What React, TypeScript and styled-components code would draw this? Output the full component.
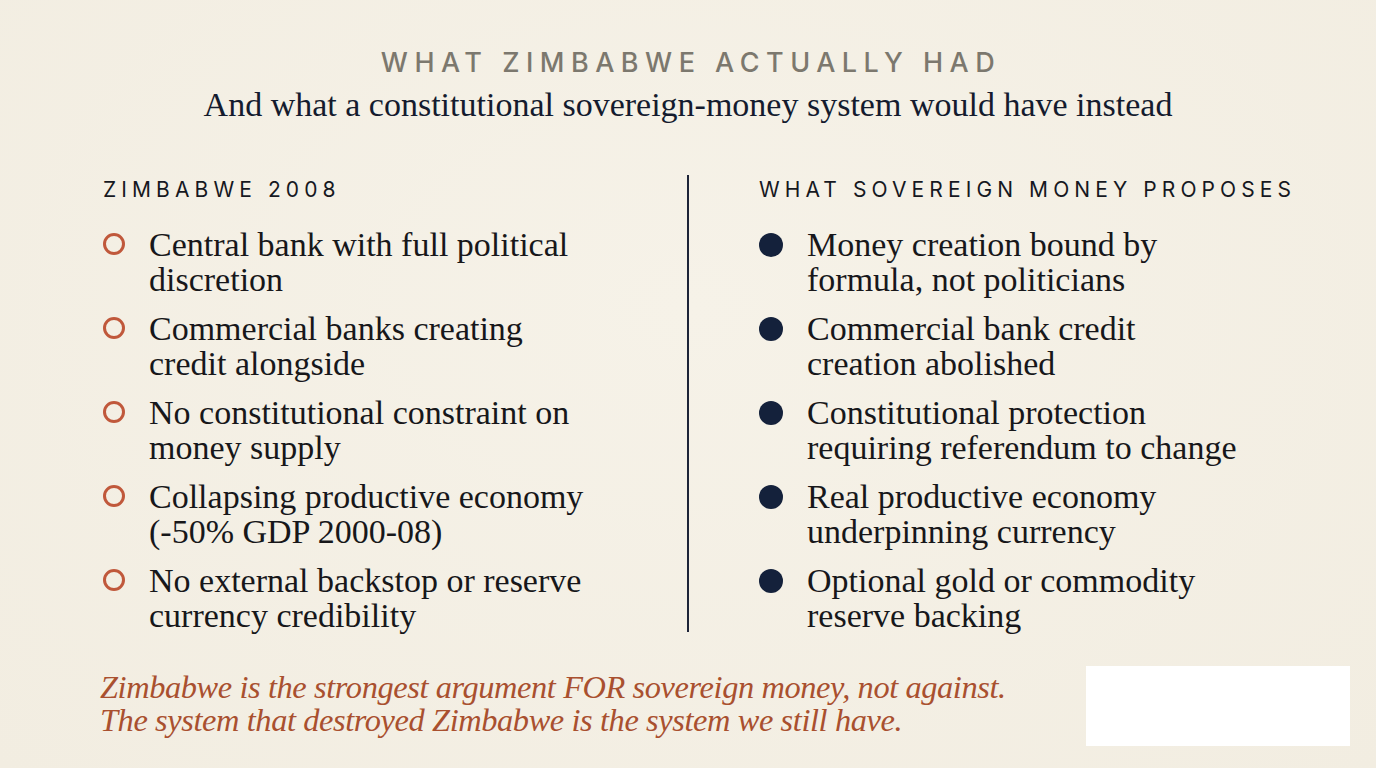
import React from "react";
import styled, { createGlobalStyle } from "styled-components";

const Global = createGlobalStyle`
  html, body { margin: 0; padding: 0; background: #f3eee3; }
  * { box-sizing: border-box; }
`;

const Page = styled.div`
  width: 1376px;
  height: 768px;
  background: radial-gradient(ellipse at 50% 40%, #f6f2e8 0%, #f2ede1 100%);
  display: flex;
  flex-direction: column;
  overflow: hidden;
`;

const Header = styled.header`
  display: flex;
  flex-direction: column;
  align-items: center;
  padding-top: 47px;
`;

const Kicker = styled.div`
  font-family: "Inter", "Liberation Sans", sans-serif;
  font-size: 27px;
  font-weight: 500;
  letter-spacing: 6.5px;
  color: #7c786e;
  line-height: 32px;
  padding-left: 6px;
`;

const Subtitle = styled.h1`
  margin: 6px 0 0;
  font-family: "Liberation Serif", serif;
  font-weight: 400;
  font-size: 34px;
  line-height: 40px;
  color: #141b2e;
`;

const Columns = styled.section`
  display: grid;
  grid-template-columns: 584px 2px 1fr;
  padding-left: 103px;
  margin-top: 50px;
  height: 457px;
`;

const Column = styled.div<{ $right?: boolean }>`
  padding-left: ${(p) => (p.$right ? "70px" : "0")};
  padding-top: 3px;
`;

const Divider = styled.div`
  background: #1d2438;
  width: 2px;
  height: 457px;
`;

const ColTitle = styled.div`
  font-family: "Inter", "Liberation Sans", sans-serif;
  font-size: 21px;
  font-weight: 400;
  letter-spacing: 5.1px;
  color: #16181f;
  line-height: 24px;
`;

const List = styled.ul`
  list-style: none;
  margin: 25px 0 0;
  padding: 0;
  display: flex;
  flex-direction: column;
  gap: 14px;
`;

const Item = styled.li`
  display: flex;
  align-items: flex-start;
  gap: 24px;
`;

const Bullet = styled.span<{ $filled?: boolean }>`
  flex: none;
  width: ${(p) => (p.$filled ? "24px" : "22px")};
  height: ${(p) => (p.$filled ? "24px" : "22px")};
  margin-top: 6px;
  border-radius: 50%;
  border: ${(p) => (p.$filled ? "none" : "3px solid #c0583b")};
  background: ${(p) => (p.$filled ? "#14213b" : "transparent")};
`;

const ItemText = styled.span`
  font-family: "Liberation Serif", serif;
  font-size: 34px;
  line-height: 35px;
  color: #17171a;
`;

const Footer = styled.footer`
  display: flex;
  align-items: flex-start;
  justify-content: space-between;
  padding: 34px 26px 0 100px;
`;

const Quote = styled.p`
  margin: 5px 0 0;
  font-family: "Liberation Serif", serif;
  font-style: italic;
  font-size: 32.4px;
  line-height: 33px;
  color: #a9502f;
  letter-spacing: -0.4px;
`;

const Blank = styled.div`
  width: 264px;
  height: 80px;
  background: #ffffff;
`;

const left = [
  ["Central bank with full political", "discretion"],
  ["Commercial banks creating", "credit alongside"],
  ["No constitutional constraint on", "money supply"],
  ["Collapsing productive economy", "(-50% GDP 2000-08)"],
  ["No external backstop or reserve", "currency credibility"],
];

const right = [
  ["Money creation bound by", "formula, not politicians"],
  ["Commercial bank credit", "creation abolished"],
  ["Constitutional protection", "requiring referendum to change"],
  ["Real productive economy", "underpinning currency"],
  ["Optional gold or commodity", "reserve backing"],
];

export default function App() {
  return (
    <>
      <Global />
      <Page>
        <Header>
          <Kicker>WHAT ZIMBABWE ACTUALLY HAD</Kicker>
          <Subtitle>And what a constitutional sovereign-money system would have instead</Subtitle>
        </Header>
        <Columns>
          <Column>
            <ColTitle>ZIMBABWE 2008</ColTitle>
            <List>
              {left.map((l) => (
                <Item key={l[0]}>
                  <Bullet />
                  <ItemText>
                    {l[0]}
                    <br />
                    {l[1]}
                  </ItemText>
                </Item>
              ))}
            </List>
          </Column>
          <Divider />
          <Column $right>
            <ColTitle>WHAT SOVEREIGN MONEY PROPOSES</ColTitle>
            <List>
              {right.map((l) => (
                <Item key={l[0]}>
                  <Bullet $filled />
                  <ItemText>
                    {l[0]}
                    <br />
                    {l[1]}
                  </ItemText>
                </Item>
              ))}
            </List>
          </Column>
        </Columns>
        <Footer>
          <Quote>
            Zimbabwe is the strongest argument FOR sovereign money, not against.
            <br />
            The system that destroyed Zimbabwe is the system we still have.
          </Quote>
          <Blank />
        </Footer>
      </Page>
    </>
  );
}
